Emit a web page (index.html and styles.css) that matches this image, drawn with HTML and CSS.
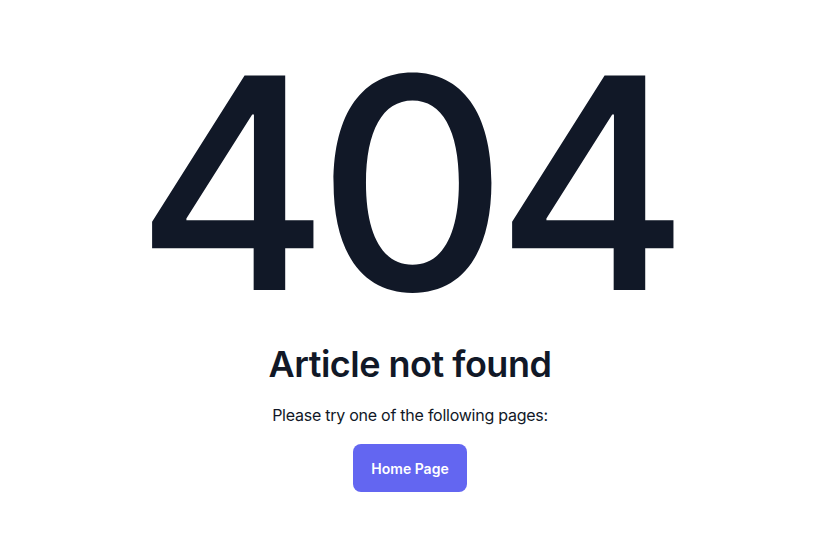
FILE: index.html
```html
<!DOCTYPE html>
<html lang="en">
<head>
<meta charset="utf-8">
<title>404 - Article not found</title>
<link rel="stylesheet" href="styles.css">
</head>
<body>
<main class="page">
  <div class="code">404</div>
  <h1 class="title">Article not found</h1>
  <p class="hint">Please try one of the following pages:</p>
  <a class="btn" href="#">Home Page</a>
</main>
</body>
</html>
```
FILE: styles.css
```css
html, body {
  margin: 0;
  padding: 0;
  background: #ffffff;
}
body {
  font-family: Inter, "Noto Sans", "Liberation Sans", sans-serif;
  color: #111827;
}
.page {
  display: flex;
  flex-direction: column;
  align-items: center;
  padding-top: 35px;
  padding-right: 14px;
}
.code {
  font-size: 295px;
  line-height: 1;
  font-weight: 500;
  letter-spacing: -12px;
  margin-right: 7px;
  color: #111827;
}
.title {
  margin: 12px 0 0;
  font-size: 36px;
  line-height: 44px;
  font-weight: 600;
  letter-spacing: -0.5px;
}
.hint {
  margin: 17px 0 0;
  font-size: 16px;
  line-height: 24px;
  font-weight: 400;
  letter-spacing: -0.25px;
}
.btn {
  margin-top: 17px;
  display: flex;
  align-items: center;
  justify-content: center;
  width: 114px;
  height: 48px;
  border-radius: 8px;
  background: #6366f1;
  color: #ffffff;
  text-decoration: none;
  font-size: 14px;
  font-weight: 600;
}
```
